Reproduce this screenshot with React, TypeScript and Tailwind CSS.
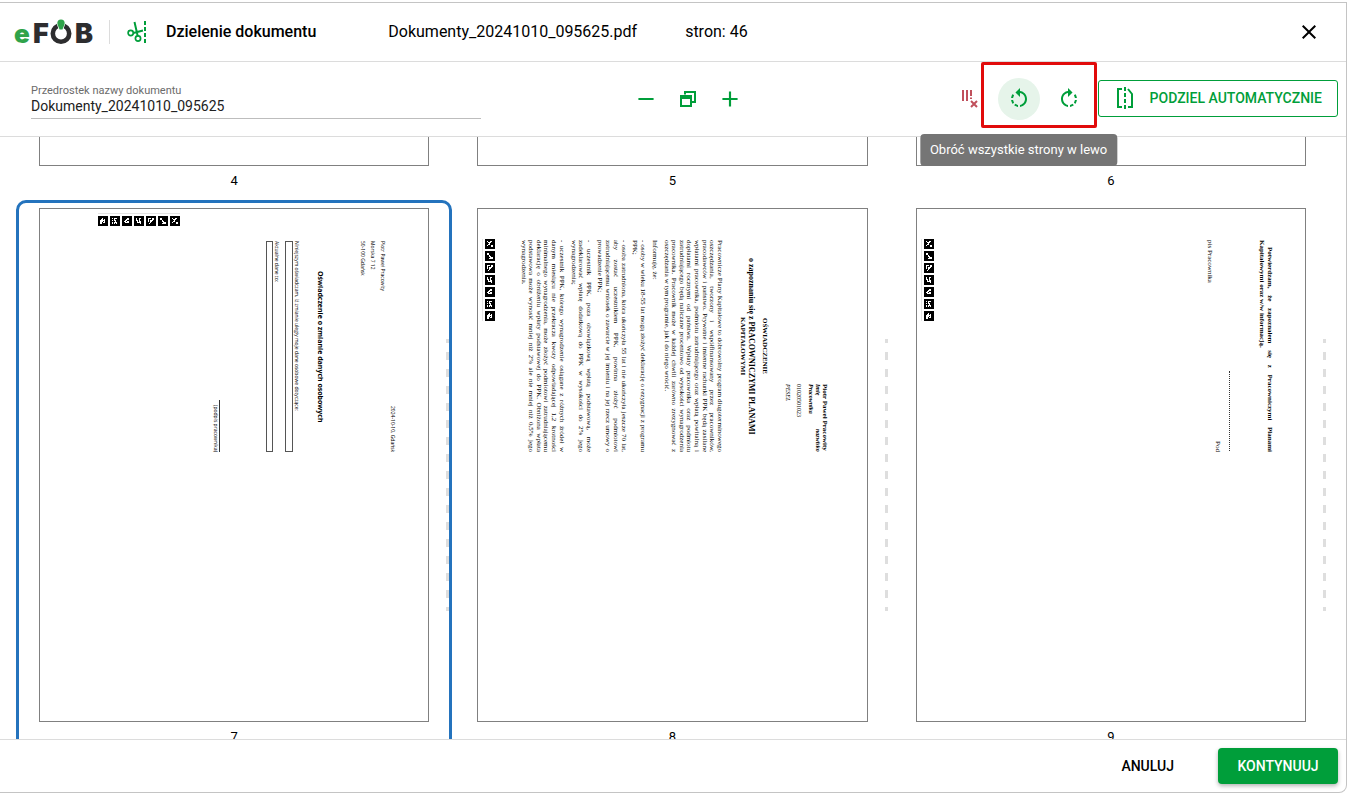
import { useLayoutEffect, useRef, useState } from 'react';
import type { ReactNode } from 'react';
import { MdAdd, MdClose, MdRemove, MdRotateLeft, MdRotateRight } from 'react-icons/md';

// 6x6 bit patterns of the separator markers printed on each scan
const markers = [
  '100110011100001000011000100011000011',
  '110000110000001000001100000111001111',
  '111011100011101110101100001000010000',
  '100110100100110100010110011110000010',
  '000110001110011000110110011110000000',
  '101110001000101100000100101110101010',
  '001000011010111110111010110110110000',
];

function Marker({ bits }: { bits: string }) {
  return (
    <svg viewBox="0 0 10 10" className="w-[10px] h-[10px] shrink-0">
      <rect width="10" height="10" fill="#000" />
      {bits.split('').map((bit, i) =>
        bit === '1' ? (
          <rect key={i} x={2 + (i % 6)} y={2 + Math.floor(i / 6)} width="1" height="1" fill="#fff" />
        ) : null
      )}
    </svg>
  );
}

function Logo() {
  return (
    <svg viewBox="0 0 80 40" className="w-[80px] h-[40px] overflow-visible" role="img" aria-label="eFOB">
      <text x="0" y="31" fontSize="26" fontWeight="900" fill="#2fa34a" className="font-['Inter',sans-serif]">
        e
      </text>
      <g fontSize="27" fontWeight="900" fill="#2d2d2f" className="font-['Inter',sans-serif]">
        <text x="19" y="31">F</text>
        <text x="61" y="31">B</text>
      </g>
      <circle cx="47" cy="21.500" r="8.200" fill="none" stroke="#2d2d2f" strokeWidth="4.600" />
      <path
        d="M47 7.500c2.500 0 3.700 1.600 3.700 3.600 0 2.300-1.400 3.700-2.200 6.400h-3c-.8-2.700-2.200-4.100-2.200-6.400 0-2 1.200-3.600 3.700-3.600z"
        fill="#2fa34a"
        stroke="#fff"
        strokeWidth="1.200"
        paintOrder="stroke"
      />
    </svg>
  );
}

function SplitIcon() {
  return (
    <svg viewBox="0 0 22 24" className="w-[22px] h-[24px]" fill="none" stroke="#009e3a" strokeWidth="1.700">
      <circle cx="3.700" cy="13" r="2.600" />
      <circle cx="11" cy="18.500" r="2.600" />
      <path d="M6.300 13l9.700-2.500M10.700 16L7.500 2" strokeWidth="2" />
      <path d="M18 1v4M18 7v4M18 13v4M18 19v4" strokeWidth="2" />
    </svg>
  );
}

function WindowsIcon() {
  return (
    <svg viewBox="0 0 18 18" className="w-[18px] h-[18px]" fill="none" stroke="#009e3a" strokeWidth="2">
      <path d="M6 4.500V2h10v10h-3" />
      <path d="M2 6h10v10H2z" />
      <path d="M1 7h12" strokeWidth="4" />
    </svg>
  );
}

function ClearSplitsIcon() {
  return (
    <svg viewBox="0 0 18 20" className="w-[18px] h-[20px]" fill="none" stroke="#c0505c" strokeWidth="2">
      <path d="M2 1v11M6 1v11M10 1v6M10 8.500v1.500" />
      <path d="M10 12l6 6M16 12l-6 6" />
    </svg>
  );
}

function AutoSplitIcon() {
  return (
    <svg viewBox="0 0 18 24" className="w-[18px] h-[24px]" fill="none" stroke="#009e3a" strokeWidth="2">
      <path d="M6 3H2v18h4" />
      <path d="M9 1v4M9 7v4M9 13v4M9 19v4" />
      <path d="M12 3l4 5v13h-4" />
    </svg>
  );
}

interface ParagraphProps {
  lines: string[];
  className: string;
}

// rotated paragraph, every line but the last one is justified
function Paragraph({ lines, className }: ParagraphProps) {
  return (
    <div className={`flex flex-col justify-between ${className}`}>
      {lines.map((line, i) => (
        <p
          key={line}
          className={
            i < lines.length - 1
              ? 'leading-[7px] whitespace-nowrap [text-align-last:justify]'
              : 'leading-[7px] whitespace-nowrap'
          }
        >
          {line}
        </p>
      ))}
    </div>
  );
}

function StatementScan() {
  return (
    <div className="font-['Open_Sans',sans-serif] text-black">
      <div className="flex gap-[2px] w-fit ml-[58px] mt-[4px] pt-[2px] border-t border-[#e4e4e4]">
        {[...markers].reverse().map((bits) => (
          <Marker key={bits} bits={bits} />
        ))}
      </div>
      <div className="[writing-mode:vertical-rl] h-[211px] w-full mt-[15px] text-[5px] leading-[10px] whitespace-nowrap">
        <p className="mr-[30px] text-end">2024-10-10, Gdańsk</p>
        <p>Piotr Paweł Pracowity</p>
        <p>Morska 7 12</p>
        <p>50-100 Gdańsk</p>
        <h2 className="mr-[33px] text-[7px] font-bold text-center">Oświadczenie o zmianie danych osobowych</h2>
        <p className="mr-[14px] leading-[8px] font-medium">
          Niniejszym oświadczam, iż zmianie uległy moje dane osobowe dotyczące:
        </p>
        <div className="w-[8px] border border-[#555]" />
        <p className="mr-[4px] leading-[8px] font-medium">Aktualne dane to:</p>
        <div className="w-[7px] border border-[#555]" />
        <p className="mr-[46px] mt-[159px] border-r border-[#333] leading-[6px] text-end">(podpis pracownika)</p>
      </div>
    </div>
  );
}

function DeclarationScan() {
  return (
    <div className="[writing-mode:vertical-rl] h-[243px] w-full pt-[31px] font-['Liberation_Serif',serif] text-[7px] leading-[10px] whitespace-nowrap text-black">
      <div className="mr-[38px] mt-[144px] h-[68px] text-[6px] leading-[8px]">
        <p className="text-[7px] font-bold">Piotr Paweł Pracowity</p>
        <p className="flex justify-between font-bold italic leading-[6px]">
          <span>Imię</span>
          <span>nazwisko</span>
        </p>
        <p className="font-bold italic">Pracownika</p>
        <p className="mr-[4px]">01020501023</p>
        <p className="mr-[3px] italic">PESEL</p>
      </div>
      <div className="mr-[15px] text-center font-bold leading-[8px]">
        <p>OŚWIADCZENIE</p>
        <p className="mr-[6px] text-[8px]">o zapoznaniu się z PRACOWNICZYMI PLANAMI</p>
        <p>KAPITAŁOWYMI</p>
      </div>
      <Paragraph
        className="mr-[16px] w-[60px]"
        lines={[
          'Pracownicze Plany Kapitałowe to dobrowolny program długoterminowego',
          'oszczędzania, tworzony i współfinansowany przez pracowników,',
          'pracodawców i państwo. Prywatne i imienne rachunki PPK będą zasilane',
          'wpłatami pracownika, podmiotu zatrudniającego oraz wpłatą powitalną i',
          'dopłatami rocznymi od państwa. Wpłaty pracownika oraz podmiotu',
          'zatrudniającego będą naliczane procentowo od wysokości wynagrodzenia',
          'pracownika. Pracownik może w każdej chwili zarówno zrezygnować z',
          'oszczędzania w tym programie, jak i do niego wrócić.',
        ]}
      />
      <Paragraph className="mr-[5px] w-[8px]" lines={['Informuję, że:']} />
      <Paragraph
        className="mr-[4px] w-[15px]"
        lines={['- osoby w wieku 18-55 lat mogą złożyć deklarację o rezygnacji z programu', 'PPK;']}
      />
      <Paragraph
        className="mr-[4px] w-[31px]"
        lines={[
          '- osoba zatrudniona, która ukończyła 55 lat i nie ukończyła jeszcze 70 lat,',
          'aby zostać uczestnikiem PPK, powinna złożyć podmiotowi',
          'zatrudniającemu wniosek o zawarcie w jej imieniu i na jej rzecz umowy o',
          'prowadzenie PPK;',
        ]}
      />
      <Paragraph
        className="mr-[4px] w-[22px]"
        lines={[
          '- uczestnik PPK, poza obowiązkową wpłatą podstawową, może',
          'zadeklarować wpłatę dodatkową do PPK w wysokości do 2% jego',
          'wynagrodzenia;',
        ]}
      />
      <Paragraph
        className="mr-[5px] w-[45px]"
        lines={[
          '- uczestnik PPK, którego wynagrodzenie osiągane z różnych źródeł w',
          'danym miesiącu nie przekracza kwoty odpowiadającej 1,2 krotności',
          'minimalnego wynagrodzenia, może złożyć podmiotowi zatrudniającemu',
          'deklarację o obniżeniu wpłaty podstawowej do PPK. Obniżona wpłata',
          'podstawowa może wynosić mniej niż 2% ale nie mniej niż 0,5% jego',
          'wynagrodzenia.',
        ]}
      />
      <div className="mr-[25px] w-fit pl-[2px] h-fit border-l border-[#e4e4e4] -mt-px flex gap-[2px]">
        {markers.map((bits) => (
          <Marker key={bits} bits={bits} />
        ))}
      </div>
    </div>
  );
}

function ConfirmationScan() {
  return (
    <div className="[writing-mode:vertical-rl] h-[243px] w-full pt-[31px] font-['Liberation_Serif',serif] text-[7px] leading-[8px] whitespace-nowrap text-black">
      <div className="mr-[31px] font-bold">
        <p className="pt-[7px] [text-align-last:justify]">Potwierdzam, że zapoznałem się z Pracowniczymi Planami</p>
        <p>Kapitałowymi oraz w/w informacją.</p>
      </div>
      <div className="mr-[28px] mt-[131px] h-[80px] border-r border-dotted border-[#333]" />
      <p className="mr-[7px] text-end">Pod</p>
      <p>pis Pracownika</p>
      <div className="mr-[272px] w-fit pl-[2px] h-fit border-l border-[#e4e4e4] -mt-px flex gap-[2px]">
        {markers.map((bits) => (
          <Marker key={bits} bits={bits} />
        ))}
      </div>
    </div>
  );
}

interface PageCardProps {
  number: number;
  selected: boolean;
  onSelect: () => void;
  children?: ReactNode;
}

function PageCard({ number, selected, onSelect, children }: PageCardProps) {
  return (
    <div
      onClick={onSelect}
      className={`relative mx-px h-[556px] border-[3px] rounded-[10px] px-5 pt-[5px] ${
        selected ? 'border-[#2473bd]' : 'border-transparent'
      }`}
    >
      <div className="h-[514px] border border-[#808080] bg-white overflow-hidden">{children}</div>
      <p className="text-center text-[13px] leading-[30px]">{number}</p>
      <div className="absolute right-0 top-[136px] w-[3px] h-[272px] bg-[repeating-linear-gradient(to_bottom,#dedede_0px_4px,transparent_4px_13px,#dedede_13px_17px)]" />
    </div>
  );
}

const pages: { number: number; scan?: ReactNode }[] = [
  { number: 4 },
  { number: 5 },
  { number: 6 },
  { number: 7, scan: <StatementScan /> },
  { number: 8, scan: <DeclarationScan /> },
  { number: 9, scan: <ConfirmationScan /> },
];

export default function App() {
  const [prefix, setPrefix] = useState('Dokumenty_20241010_095625');
  const [selected, setSelected] = useState(7);
  const listRef = useRef<HTMLDivElement>(null);

  useLayoutEffect(() => {
    if (listRef.current) listRef.current.scrollTop = 493;
  }, []);

  return (
    <div className="h-screen bg-white pt-[2px] pr-[2px] pb-px font-['Roboto',sans-serif] text-black">
      <div className="h-full flex flex-col border-t border-r border-b border-[#c4c4c4] rounded-br-[8px] overflow-hidden">
        <header className="flex items-center h-[59px] shrink-0 border-b border-[#dcdcdc] pl-[14px] pr-[25px]">
          <Logo />
          <div className="w-px h-6 ml-[15px] bg-[#dcdcdc]" />
          <div className="ml-[17px]">
            <SplitIcon />
          </div>
          <h1 className="ml-[17px] text-[16px] font-medium">Dzielenie dokumentu</h1>
          <p className="ml-[72px] text-[16px]">Dokumenty_20241010_095625.pdf</p>
          <p className="ml-[48px] text-[16px]">stron: 46</p>
          <button type="button" aria-label="Zamknij" className="ml-auto">
            <MdClose size={24} />
          </button>
        </header>

        <div className="flex items-center h-[75px] shrink-0 border-b border-[#dcdcdc] pl-[31px] pr-[8px]">
          <div className="w-[450px] pt-[4px]">
            <label htmlFor="prefix" className="block text-[11px] leading-[14px] text-[#6b6b6b]">
              Przedrostek nazwy dokumentu
            </label>
            <input
              id="prefix"
              value={prefix}
              onChange={(e) => setPrefix(e.target.value)}
              className="block w-full h-[21px] pb-[4px] text-[14px] leading-[16px] text-[#212121] border-b border-[#bdbdbd] outline-none"
            />
          </div>
          <div className="flex ml-[144px] text-[#009e3a]">
            <button type="button" aria-label="Pomniejsz" className="w-[42px] h-[42px] flex items-center justify-center">
              <MdRemove size={26} />
            </button>
            <button type="button" aria-label="Rozmiar domyślny" className="w-[42px] h-[42px] flex items-center justify-center">
              <WindowsIcon />
            </button>
            <button type="button" aria-label="Powiększ" className="w-[42px] h-[42px] flex items-center justify-center">
              <MdAdd size={26} />
            </button>
          </div>
          <div className="flex items-center ml-auto text-[#009e3a]">
            <button type="button" aria-label="Usuń podziały" className="w-[42px] h-[42px] mr-[7px] flex items-center justify-center">
              <ClearSplitsIcon />
            </button>
            <div className="relative flex gap-[8px] mr-[8px]">
              <button
                type="button"
                aria-describedby="rotate-tip"
                aria-label="Obróć w lewo"
                className="w-[42px] h-[42px] flex items-center justify-center rounded-full bg-[#e6f4ea]"
              >
                <MdRotateLeft size={24} />
              </button>
              <button type="button" aria-label="Obróć w prawo" className="w-[42px] h-[42px] flex items-center justify-center">
                <MdRotateRight size={24} />
              </button>
              <div className="absolute -left-[17px] -right-[7px] -top-[16px] -bottom-[8px] border-[3px] border-[#e10b0b] rounded-[2px] pointer-events-none" />
              <div
                id="rotate-tip"
                role="tooltip"
                className="absolute z-10 left-[21px] top-[56px] -translate-x-1/2 h-[32px] px-[10px] rounded-[4px] bg-[#757575] text-white text-[13px] leading-[32px] whitespace-nowrap"
              >
                Obróć wszystkie strony w lewo
              </div>
            </div>
            <button
              type="button"
              className="flex items-center h-[37px] mb-[2px] pl-[17px] pr-[15px] gap-[16px] border border-[#009e3a] rounded-[3px] text-[14px] font-medium whitespace-nowrap"
            >
              <AutoSplitIcon />
              PODZIEL AUTOMATYCZNIE
            </button>
          </div>
        </div>

        <div ref={listRef} className="flex-1 min-h-0 overflow-y-auto [scrollbar-width:none]">
          <div className="grid grid-cols-3 pl-[15px] pr-[16px]">
            {pages.map((page) => (
              <PageCard
                key={page.number}
                number={page.number}
                selected={page.number === selected}
                onSelect={() => setSelected(page.number)}
              >
                {page.scan}
              </PageCard>
            ))}
          </div>
        </div>

        <footer className="flex items-center justify-end h-[53px] shrink-0 border-t border-[#dcdcdc] pr-[8px] text-[14px] font-medium">
          <button type="button" className="h-9 px-4 mr-[28px]">
            ANULUJ
          </button>
          <button
            type="button"
            className="h-9 w-[120px] rounded-[4px] bg-[#009e3a] text-white shadow-[0_2px_4px_rgba(0,0,0,0.3)]"
          >
            KONTYNUUJ
          </button>
        </footer>
      </div>
    </div>
  );
}
